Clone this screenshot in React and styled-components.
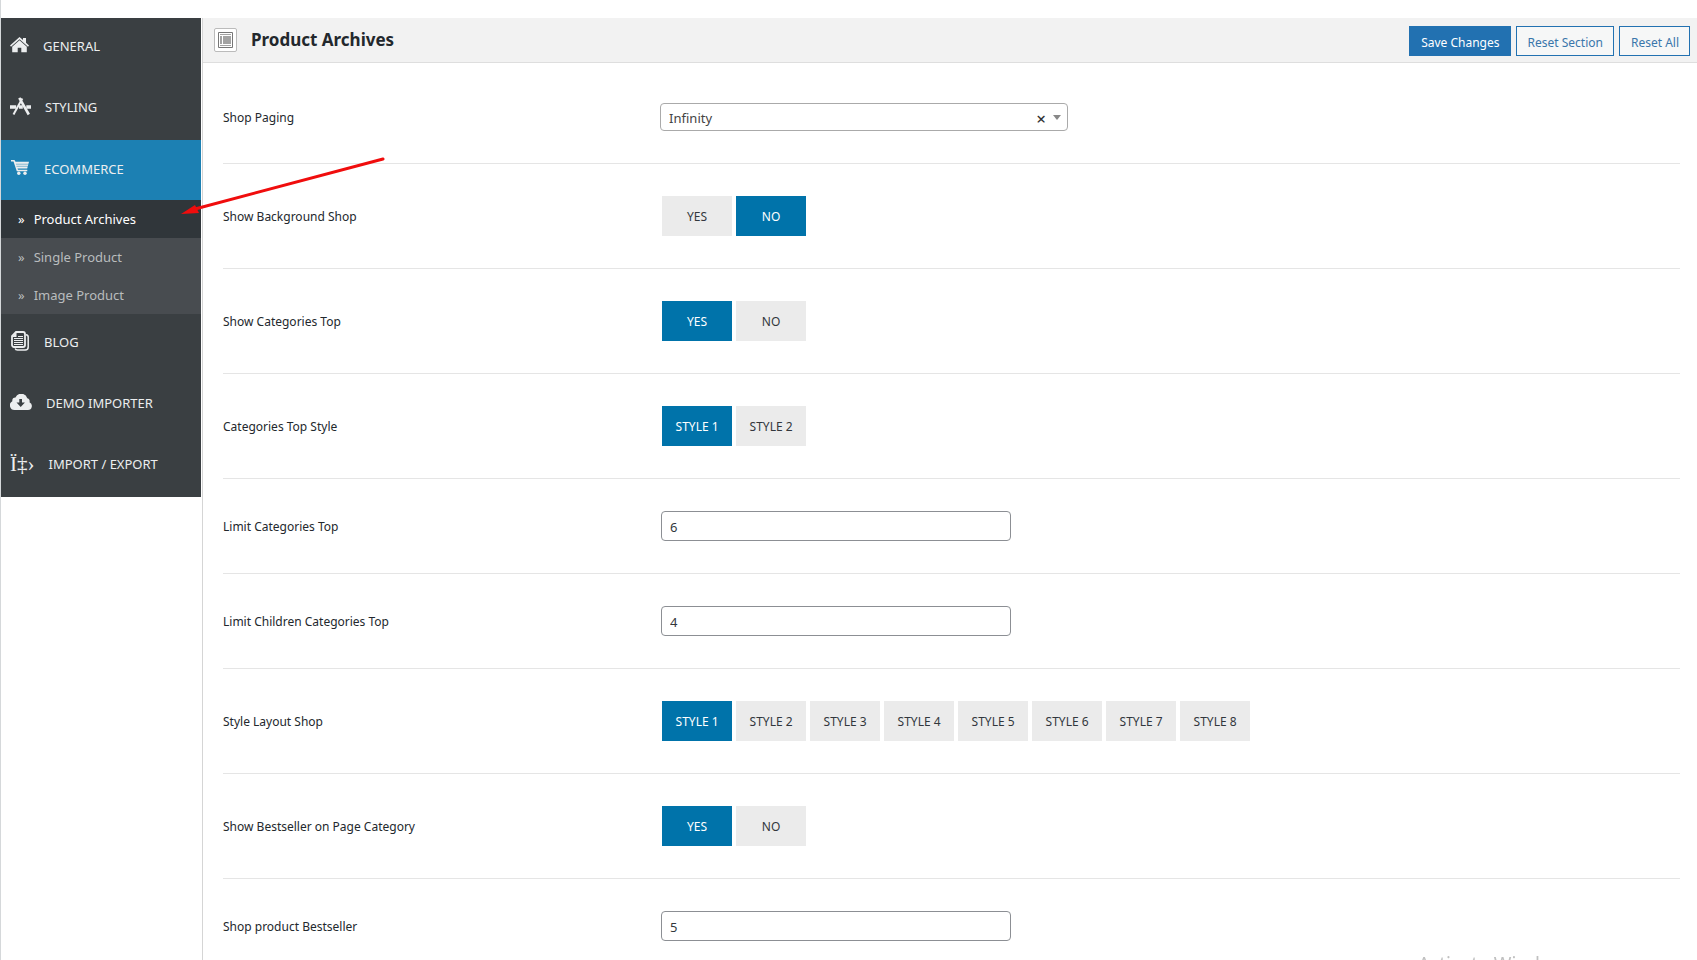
import React, { useState } from 'react';
import styled, { createGlobalStyle } from 'styled-components';

const rows = [
  { id: 'paging', label: 'Shop Paging', type: 'select', value: 'Infinity', options: ['Infinity', 'Pagination', 'Load More'] },
  { id: 'background', label: 'Show Background Shop', type: 'switch', value: 'NO', options: ['YES', 'NO'] },
  { id: 'categories', label: 'Show Categories Top', type: 'switch', value: 'YES', options: ['YES', 'NO'] },
  { id: 'categoriesStyle', label: 'Categories Top Style', type: 'switch', value: 'STYLE 1', options: ['STYLE 1', 'STYLE 2'] },
  { id: 'limit', label: 'Limit Categories Top', type: 'text', value: '6' },
  { id: 'limitChildren', label: 'Limit Children Categories Top', type: 'text', value: '4' },
  {
    id: 'layout',
    label: 'Style Layout Shop',
    type: 'switch',
    value: 'STYLE 1',
    options: ['STYLE 1', 'STYLE 2', 'STYLE 3', 'STYLE 4', 'STYLE 5', 'STYLE 6', 'STYLE 7', 'STYLE 8'],
  },
  { id: 'bestseller', label: 'Show Bestseller on Page Category', type: 'switch', value: 'YES', options: ['YES', 'NO'] },
  { id: 'bestsellerCount', label: 'Shop product Bestseller', type: 'text', value: '5' },
];

const HomeIcon = () => (
  <svg width="19" height="16" viewBox="0 0 19 16" fill="currentColor" aria-hidden="true">
    <path d="M9.500 0 13 3V1h3v4.800L19 8.500l-1 1.300L9.500 2.300 1 9.800 0 8.500z" />
    <path d="M9.500 3.200 16.800 9.700V15.200H11.300v-4.500H7.700v4.500H2.200V9.700z" />
  </svg>
);

const StylingIcon = () => (
  <svg width="21" height="19" viewBox="0 0 21 19" fill="none" stroke="currentColor" aria-hidden="true">
    <path d="M12.300 1.500 3.500 17.500" strokeWidth="2" />
    <path d="M9.300 .8 18.800 17.500" strokeWidth="2.600" />
    <path d="M0 10h6.200M9 10h3.800M16.300 10H21" strokeWidth="3.600" />
  </svg>
);

const CartIcon = () => (
  <svg width="20" height="16" viewBox="0 0 20 16" fill="currentColor" aria-hidden="true">
    <path d="M1 0h3.500l1 1.800H19L17.200 8.500H7.500l.5 1.200h9.300v1.600H6.800L3.500 1.500H1z" />
    <circle cx="8.800" cy="13.300" r="1.700" />
    <circle cx="15" cy="13.300" r="1.700" />
    <path d="M6 4.200h13M6.500 6.300h12" stroke="#1c80b3" strokeWidth=".5" />
  </svg>
);

const BlogIcon = () => (
  <svg width="20" height="20" viewBox="0 0 20 20" fill="none" stroke="currentColor" aria-hidden="true">
    <path d="M6 1h7a2 2 0 0 1 2 2v11a2 2 0 0 1-2 2H4a2 2 0 0 1-2-2V5z" strokeWidth="1.800" />
    <path d="M6.500 1v5H2z" fill="currentColor" stroke="none" />
    <path d="M4 7.500h9M4 9.500h9M4 11.500h9M4 13.500h9M8 5.500h5" strokeWidth="1.200" />
    <path d="M16 3.800q2.200.3 2.200 2.200V16a3 3 0 0 1-3 3H7.500q-2 0-2.300-1.500" strokeWidth="1.500" />
  </svg>
);

const CloudIcon = () => (
  <svg width="22" height="16" viewBox="0 0 22 16" fill="currentColor" aria-hidden="true">
    <path
      fillRule="evenodd"
      d="M4.500 16A4.700 4.700 0 0 1 2.300 7.200 3.400 3.400 0 0 1 5.500 3.500 6.300 6.300 0 0 1 17.300 4.200a3 3 0 0 1 2.200 4A4.100 4.100 0 0 1 18 16zM9.300 5v3.500H6.500l4.200 4.500 4.200-4.500h-2.900V5z"
    />
  </svg>
);

const menu = [
  { name: 'GENERAL', icon: <HomeIcon /> },
  { name: 'STYLING', icon: <StylingIcon /> },
  { name: 'ECOMMERCE', icon: <CartIcon />, children: ['Product Archives', 'Single Product', 'Image Product'] },
  { name: 'BLOG', icon: <BlogIcon /> },
  { name: 'DEMO IMPORTER', icon: <CloudIcon /> },
  { name: 'IMPORT / EXPORT', glyph: 'Ï‡›' },
];

const SelectField = ({ row, value, onChange }) => (
  <SelectWrapper>
    <Select id={row.id} value={value} onChange={(e) => onChange(e.target.value)}>
      <option value="" />
      {row.options.map((option) => (
        <option key={option}>{option}</option>
      ))}
    </Select>
    <SelectTools>
      <ClearButton type="button" aria-label="Clear" onClick={() => onChange('')}>
        ×
      </ClearButton>
      <Caret />
    </SelectTools>
  </SelectWrapper>
);

const SwitchField = ({ row, value, onChange }) => (
  <ButtonGroup role="group" aria-labelledby={`${row.id}-label`}>
    {row.options.map((option) => (
      <SwitchButton
        key={option}
        type="button"
        $active={option === value}
        aria-pressed={option === value}
        onClick={() => onChange(option)}
      >
        {option}
      </SwitchButton>
    ))}
  </ButtonGroup>
);

const App = () => {
  const [values, setValues] = useState(Object.fromEntries(rows.map((row) => [row.id, row.value])));
  const [section, setSection] = useState('Product Archives');

  const handleChange = (id) => (value) => setValues({ ...values, [id]: value });
  const handleReset = () => setValues(Object.fromEntries(rows.map((row) => [row.id, row.value])));

  return (
    <Page>
      <GlobalStyle />
      <Sidebar>
        {menu.map((item) => (
          <React.Fragment key={item.name}>
            <MenuItem href="#" $active={!!item.children}>
              {item.glyph ? <GlyphIcon>{item.glyph}</GlyphIcon> : item.icon}
              {item.name}
            </MenuItem>
            {item.children?.map((child) => (
              <SubItem key={child} href="#" $active={child === section} onClick={() => setSection(child)}>
                <span>»</span>
                {child}
              </SubItem>
            ))}
          </React.Fragment>
        ))}
      </Sidebar>
      <Main>
        <Header>
          <TitleIcon>
            <svg width="16" height="16" viewBox="0 0 16 16" fill="none" aria-hidden="true">
              <path d="M.5.5h14v15H.5z" stroke="#777" />
              <path d="M2 2h11v1H2zM2 4h2v8H2zM5 4h8v8H5zM2 13h11v1H2z" fill="#a3a3a3" />
            </svg>
          </TitleIcon>
          <Title>{section}</Title>
          <Actions>
            <ActionButton type="button" $primary>
              Save Changes
            </ActionButton>
            <ActionButton type="button" onClick={handleReset}>
              Reset Section
            </ActionButton>
            <ActionButton type="button" onClick={handleReset}>
              Reset All
            </ActionButton>
          </Actions>
        </Header>
        <Form>
          {rows.map((row) => (
            <Row key={row.id}>
              <Label
                as={row.type === 'switch' ? 'span' : 'label'}
                id={`${row.id}-label`}
                htmlFor={row.type === 'switch' ? undefined : row.id}
              >
                {row.label}
              </Label>
              {row.type === 'select' && <SelectField row={row} value={values[row.id]} onChange={handleChange(row.id)} />}
              {row.type === 'switch' && <SwitchField row={row} value={values[row.id]} onChange={handleChange(row.id)} />}
              {row.type === 'text' && (
                <TextInput
                  id={row.id}
                  type="text"
                  value={values[row.id]}
                  onChange={(e) => handleChange(row.id)(e.target.value)}
                />
              )}
            </Row>
          ))}
        </Form>
      </Main>
      <Arrow width="206" height="60" viewBox="0 0 206 60" aria-hidden="true">
        <path d="M202 3 14 53" stroke="#f00d0d" strokeWidth="3" strokeLinecap="round" />
        <path d="M0 58 14 49 18 57z" fill="#f00d0d" />
      </Arrow>
      <Watermark>Activate Windows</Watermark>
    </Page>
  );
};

const GlobalStyle = createGlobalStyle`
  * {
    box-sizing: border-box;
  }

  body {
    margin: 0;
    background: #fff;
    font-family: "Noto Sans", "Open Sans", sans-serif;
    font-size: 12px;
    color: #23282d;
  }

  button, input, select {
    font-family: inherit;
  }
`;

const Page = styled.div`
  position: relative;
  display: flex;
  align-items: stretch;
  min-height: 100vh;
  padding-top: 18px;
  border-left: 1px solid #d5d8da;
`;

const Sidebar = styled.nav`
  flex: 0 0 200px;
  align-self: flex-start;
  background: #3a3f42;
`;

const MenuItem = styled.a`
  display: flex;
  align-items: center;
  gap: 14px;
  height: ${({ $active }) => ($active ? '60px' : '61px')};
  padding: ${({ $active }) => ($active ? '0 9px 2px' : '0 9px 5px')};
  background: ${({ $active }) => ($active ? '#1c80b3' : '#3a3f42')};
  color: #eceeef;
  font-size: 13px;
  text-decoration: none;

  svg {
    margin-bottom: 2px;
  }
`;

const GlyphIcon = styled.span`
  font-family: "Liberation Serif", serif;
  font-size: 21px;
`;

const SubItem = styled.a`
  display: flex;
  align-items: center;
  gap: 9px;
  height: 38px;
  padding: 0 17px;
  background: ${({ $active }) => ($active ? '#30363a' : '#484c50')};
  color: ${({ $active }) => ($active ? '#fff' : '#b9bcbe')};
  font-size: 13px;
  text-decoration: none;
`;

const Main = styled.main`
  flex: 1;
  min-width: 0;
  margin-left: 1px;
  border-left: 1px solid #d5d5d5;
`;

const Header = styled.header`
  display: flex;
  align-items: center;
  height: 45px;
  padding: 0 7px 0 11px;
  background: #f2f2f2;
  border-bottom: 1px solid #dedede;
`;

const TitleIcon = styled.span`
  display: flex;
  align-items: center;
  justify-content: center;
  width: 23px;
  height: 24px;
  border: 1px solid #bbb;
  border-radius: 2px;
  background: #fff;
`;

const Title = styled.h1`
  margin: 0 0 2px 14px;
  font-size: 17px;
  font-weight: 700;
`;

const Actions = styled.div`
  display: flex;
  gap: 5px;
  margin-left: auto;
  padding-top: 2px;
`;

const ActionButton = styled.button`
  height: 30px;
  padding: 2px 10px 0 11px;
  border: 1px solid #2271b1;
  background: ${({ $primary }) => ($primary ? '#2271b1' : '#f6f7f7')};
  color: ${({ $primary }) => ($primary ? '#fff' : '#3a76ab')};
  font-size: 12px;
  cursor: pointer;
`;

const Form = styled.form`
  padding: 8px 17px 0 20px;
`;

const Row = styled.div`
  display: grid;
  grid-template-columns: 30% 70%;
  align-items: center;
  padding: 32px 0;
  border-bottom: 1px solid #e5e5e5;

  &:last-child {
    padding-bottom: 0;
    border-bottom: 0;
  }
`;

const Label = styled.label`
  font-size: 12px;
`;

const SelectWrapper = styled.div`
  position: relative;
  width: 40%;
`;

const Select = styled.select`
  display: block;
  width: 100%;
  height: 28px;
  padding: 2px 48px 0 8px;
  appearance: none;
  border: 1px solid #aaa;
  border-radius: 4px;
  background: #fff;
  color: #444;
  font-size: 13px;
`;

/* sits over the right end of the select */
const SelectTools = styled.div`
  position: absolute;
  top: 0;
  right: 7px;
  display: flex;
  align-items: center;
  gap: 7px;
  height: 100%;
  pointer-events: none;
`;

const ClearButton = styled.button`
  padding: 3px 0 0;
  border: 0;
  background: none;
  color: #333;
  font-size: 17px;
  font-weight: 500;
  line-height: 20px;
  cursor: pointer;
  pointer-events: auto;
`;

const Caret = styled.span`
  border: 4px solid transparent;
  border-top: 5px solid #888;
  border-bottom: 0;
`;

const ButtonGroup = styled.div`
  display: flex;
  flex-wrap: wrap;
  gap: 4px;
  margin-left: 2px;
`;

const SwitchButton = styled.button`
  width: 70px;
  height: 40px;
  padding: 0;
  border: 0;
  background: ${({ $active }) => ($active ? '#0073aa' : '#ebebeb')};
  color: ${({ $active }) => ($active ? '#fff' : '#32373c')};
  font-size: 12px;
  cursor: pointer;
`;

const TextInput = styled.input`
  width: 350px;
  max-width: 100%;
  height: 30px;
  margin-left: 1px;
  padding: 1px 8px 0;
  border: 1px solid #8c8f94;
  border-radius: 4px;
  background: #fff;
  color: #32373c;
  font-size: 13px;
`;

const Arrow = styled.svg`
  position: absolute;
  top: 156px;
  left: 180px;
  pointer-events: none;
`;

/* only the tops of the letters reach into the window */
const Watermark = styled.div`
  position: fixed;
  right: 122px;
  bottom: 0;
  height: 5px;
  overflow: hidden;
  color: #c0c0c0;
  font-size: 19px;
  line-height: 18px;
  pointer-events: none;
`;

export default App;
